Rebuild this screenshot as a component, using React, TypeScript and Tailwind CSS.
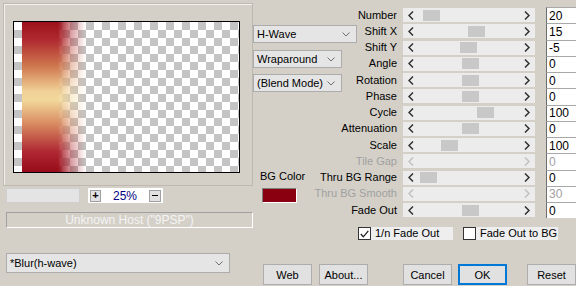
import React from "react";

const Chevron = ({ className = "" }: { className?: string }) => (
  <svg width="8" height="5" viewBox="0 0 8 5" className={className}>
    <polyline points="0.5,0.5 4,4 7.5,0.5" fill="none" stroke="#707070" strokeWidth="1" />
  </svg>
);

const Arrow = ({ dir, disabled }: { dir: "l" | "r"; disabled?: boolean }) => (
  <svg width="6" height="9" viewBox="0 0 6 9">
    <polyline
      points={dir === "l" ? "5,0.5 1,4.5 5,8.5" : "1,0.5 5,4.5 1,8.5"}
      fill="none"
      stroke={disabled ? "#c0c0c0" : "#303030"}
      strokeWidth="1.5"
    />
  </svg>
);

type Row = { label: string; value: string; thumb: number | null; disabled?: boolean };

const rows: Row[] = [
  { label: "Number", value: "20", thumb: 20 },
  { label: "Shift X", value: "15", thumb: 65 },
  { label: "Shift Y", value: "-5", thumb: 57 },
  { label: "Angle", value: "0", thumb: 59 },
  { label: "Rotation", value: "0", thumb: 59 },
  { label: "Phase", value: "0", thumb: 59 },
  { label: "Cycle", value: "100", thumb: 74 },
  { label: "Attenuation", value: "0", thumb: 59 },
  { label: "Scale", value: "100", thumb: 38 },
  { label: "Tile Gap", value: "0", thumb: null, disabled: true },
  { label: "Thru BG Range", value: "0", thumb: 17 },
  { label: "Thru BG Smooth", value: "30", thumb: null, disabled: true },
  { label: "Fade Out", value: "0", thumb: 59 },
];

function Dropdown({ text, w, h }: { text: string; w: string; h: string }) {
  return (
    <div
      className={`${w} ${h} shrink-0 flex items-center justify-between bg-[#e5e5e5] border border-[#acacac] pl-[3px] pr-[6px] text-[11px] text-black whitespace-nowrap`}
    >
      <span>{text}</span>
      <Chevron />
    </div>
  );
}

function Button({ children, ok }: { children: React.ReactNode; ok?: boolean }) {
  return (
    <div
      className={`w-[49px] h-[21px] flex items-center justify-center bg-[#e1e1e1] text-[11px] text-black ${
        ok ? "border-2 border-[#0078d7]" : "border border-[#adadad]"
      }`}
    >
      {children}
    </div>
  );
}

export default function App() {
  return (
    <div className="w-[576px] h-[286px] bg-[#d4d0c8] flex font-['Liberation_Sans',Arial,sans-serif] text-[11px] text-black overflow-hidden select-none">
      {/* Left column */}
      <div className="w-[253px] shrink-0 flex flex-col pl-[3px] pt-[3px]">
        <div className="w-[250px] h-[183px] border border-[#bdb9b1] shadow-[inset_1px_1px_0_#f4f2ee] pl-[9px] pt-[17px]">
          <div className="relative w-[227px] h-[152px] border border-black bg-[conic-gradient(#c4c4c4_25%,#fff_0_50%,#c4c4c4_0_75%,#fff_0)] bg-[length:16px_16px]">
            <div className="absolute left-[8px] top-0 bottom-0 w-[64px] bg-[linear-gradient(to_bottom,#9c101c,#b02a30_12%,#d07a50_30%,#f0d096_46%,#f2d89a_52%,#d88a60_68%,#b02a34_86%,#980a18)] [mask-image:linear-gradient(to_right,#000_0%,#000_56%,rgba(0,0,0,0.4)_78%,transparent_100%)]" />
          </div>
        </div>

        <div className="flex items-center mt-[2px] ml-[3px] h-[15px]">
          <div className="w-[74px] h-[15px] bg-[#e4e4e4] border border-[#cfcfcf]" />
          <div className="ml-[8px] w-[75px] h-[15px] bg-white flex items-center px-[2px]">
            <div className="w-[11px] h-[12px] bg-[#e1e1e1] border border-[#a0a0a0] flex items-center justify-center text-[11px] leading-none font-bold">
              +
            </div>
            <div className="flex-1 text-center text-[#000080] text-[12px] leading-none">25%</div>
            <div className="w-[12px] h-[12px] bg-[#e1e1e1] border border-[#a0a0a0] flex items-center justify-center">
              <div className="w-[6px] h-[1px] bg-black" />
            </div>
          </div>
        </div>

        <div className="mt-[9px] ml-[3px] w-[247px] h-[16px] border-t border-l border-[#a0a0a0] border-b border-r border-b-white border-r-white flex items-center justify-center text-[12px] text-[#f4f4f4]">
          Unknown Host ("9PSP")
        </div>

        <div className="mt-[25px] ml-[3px]">
          <Dropdown text="*Blur(h-wave)" w="w-[224px]" h="h-[20px]" />
        </div>
      </div>

      {/* Right region */}
      <div className="flex-1 flex flex-col">
        <div className="flex">
          {/* Middle column */}
          <div className="w-[47px] shrink-0 flex flex-col pt-[25px]">
            <Dropdown text="H-Wave" w="w-[104px]" h="h-[18px]" />
            <div className="mt-[7px]">
              <Dropdown text="Wraparound" w="w-[89px]" h="h-[18px]" />
            </div>
            <div className="mt-[6px]">
              <Dropdown text="(Blend Mode)" w="w-[89px]" h="h-[18px]" />
            </div>
            <div className="mt-[76px] ml-[7px] w-[44px] text-[11px] whitespace-nowrap">BG Color</div>
            <div className="mt-[3px] ml-[9px] w-[35px] h-[15px] border border-[#808080] border-b-white border-r-white bg-[#8a0010]" />
          </div>

          {/* Settings */}
          <div className="flex flex-col pt-[7px]">
            {rows.map((r) => (
              <div key={r.label} className="flex items-center h-[16.25px]">
                <div
                  className={`w-[97px] text-right text-[11px] leading-none whitespace-nowrap ${
                    r.disabled ? "text-[#a0a0a0]" : "text-black"
                  }`}
                >
                  {r.label}
                </div>
                <div className="ml-[6px] w-[132px] h-[14px] bg-[#ececec] relative flex items-center justify-between px-[5px]">
                  <Arrow dir="l" disabled={r.disabled} />
                  <Arrow dir="r" disabled={r.disabled} />
                  {r.thumb !== null && (
                    <div
                      className="absolute top-[1.5px] w-[17px] h-[11px] bg-[#c8c8c8]"
                      style={{ left: `${r.thumb}px` }}
                    />
                  )}
                </div>
                <div
                  className={`ml-[11px] w-[30px] h-full bg-white border-l border-t border-l-[#6e6e6e] border-t-[#a8a8a8] pl-[2px] flex items-center text-[12px] leading-none ${
                    r.disabled ? "text-[#a0a0a0]" : "text-black"
                  }`}
                >
                  {r.value}
                </div>
              </div>
            ))}
          </div>
        </div>

        {/* Checkboxes */}
        <div className="flex mt-[9px] pl-[105px] h-[14px]">
          <div className="w-[95px] h-[13px] bg-[#eeeeee] flex items-center">
            <div className="w-[13px] h-[13px] bg-white border border-[#333] flex items-center justify-center">
              <svg width="9" height="8" viewBox="0 0 9 8">
                <polyline points="0.8,4 3.3,6.8 8.3,0.8" fill="none" stroke="#222" strokeWidth="1.3" />
              </svg>
            </div>
            <span className="ml-[4px] text-[11px] leading-none">1/n Fade Out</span>
          </div>
          <div className="ml-[10px] w-[95px] h-[13px] bg-[#eeeeee] flex items-center">
            <div className="w-[13px] h-[13px] bg-white border border-[#333]" />
            <span className="ml-[4px] text-[11px] leading-none whitespace-nowrap">Fade Out to BG</span>
          </div>
        </div>

        {/* Buttons */}
        <div className="flex mt-[23px] pl-[10px]">
          <Button>Web</Button>
          <div className="ml-[7px]">
            <Button>About...</Button>
          </div>
          <div className="ml-[35px]">
            <Button>Cancel</Button>
          </div>
          <div className="ml-[6px]">
            <Button ok>OK</Button>
          </div>
          <div className="ml-[20px]">
            <Button>Reset</Button>
          </div>
        </div>
      </div>
    </div>
  );
}
